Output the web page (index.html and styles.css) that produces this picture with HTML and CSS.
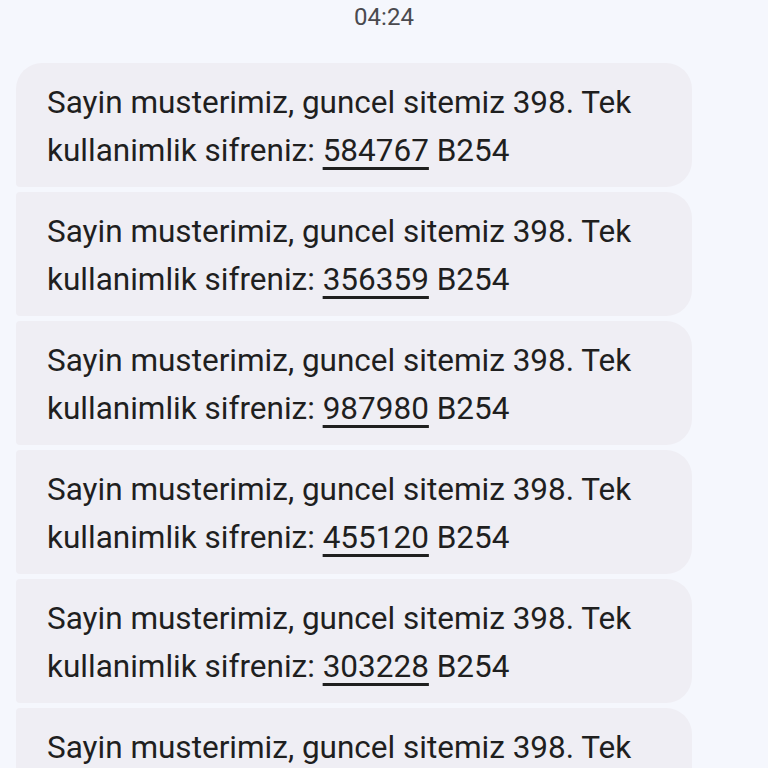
FILE: index.html
```html
<!DOCTYPE html>
<html lang="tr">
<head>
    <meta charset="UTF-8">
    <meta name="viewport" content="width=device-width, initial-scale=1.0">
    <title>Mesajlar</title>
    <link rel="stylesheet" href="styles.css">
</head>
<body>
    <div class="timestamp">04:24</div>
    <div class="thread">
        <div class="bubble first">Sayin musterimiz, guncel sitemiz 398. Tek kullanimlik sifreniz: <span class="code">584767</span> B254</div>
        <div class="bubble">Sayin musterimiz, guncel sitemiz 398. Tek kullanimlik sifreniz: <span class="code">356359</span> B254</div>
        <div class="bubble">Sayin musterimiz, guncel sitemiz 398. Tek kullanimlik sifreniz: <span class="code">987980</span> B254</div>
        <div class="bubble">Sayin musterimiz, guncel sitemiz 398. Tek kullanimlik sifreniz: <span class="code">455120</span> B254</div>
        <div class="bubble">Sayin musterimiz, guncel sitemiz 398. Tek kullanimlik sifreniz: <span class="code">303228</span> B254</div>
        <div class="bubble">Sayin musterimiz, guncel sitemiz 398. Tek kullanimlik sifreniz: <span class="code">120954</span> B254</div>
    </div>
</body>
</html>
```

FILE: styles.css
```css
body {
    margin: 0;
    background-color: #f5f7fd;
    font-family: Roboto, 'Noto Sans', sans-serif;
    color: #1f1f1f;
    overflow: hidden;
}
.timestamp {
    text-align: center;
    font-size: 24px;
    color: #4a4a4f;
    line-height: 34px;
    margin-bottom: 29px;
}
.thread {
    display: flex;
    flex-direction: column;
    align-items: flex-start;
    gap: 5px;
    padding: 0 16px;
}
.bubble {
    max-width: 614px;
    padding: 16px 31px 12px 31px;
    background-color: #efeef4;
    border-radius: 4px 26px 26px 4px;
    font-size: 31.5px;
    line-height: 48px;
}
.bubble.first {
    border-top-left-radius: 26px;
}
.code {
    text-decoration: underline;
    text-decoration-thickness: 3px;
    text-underline-offset: 6px;
}
```
